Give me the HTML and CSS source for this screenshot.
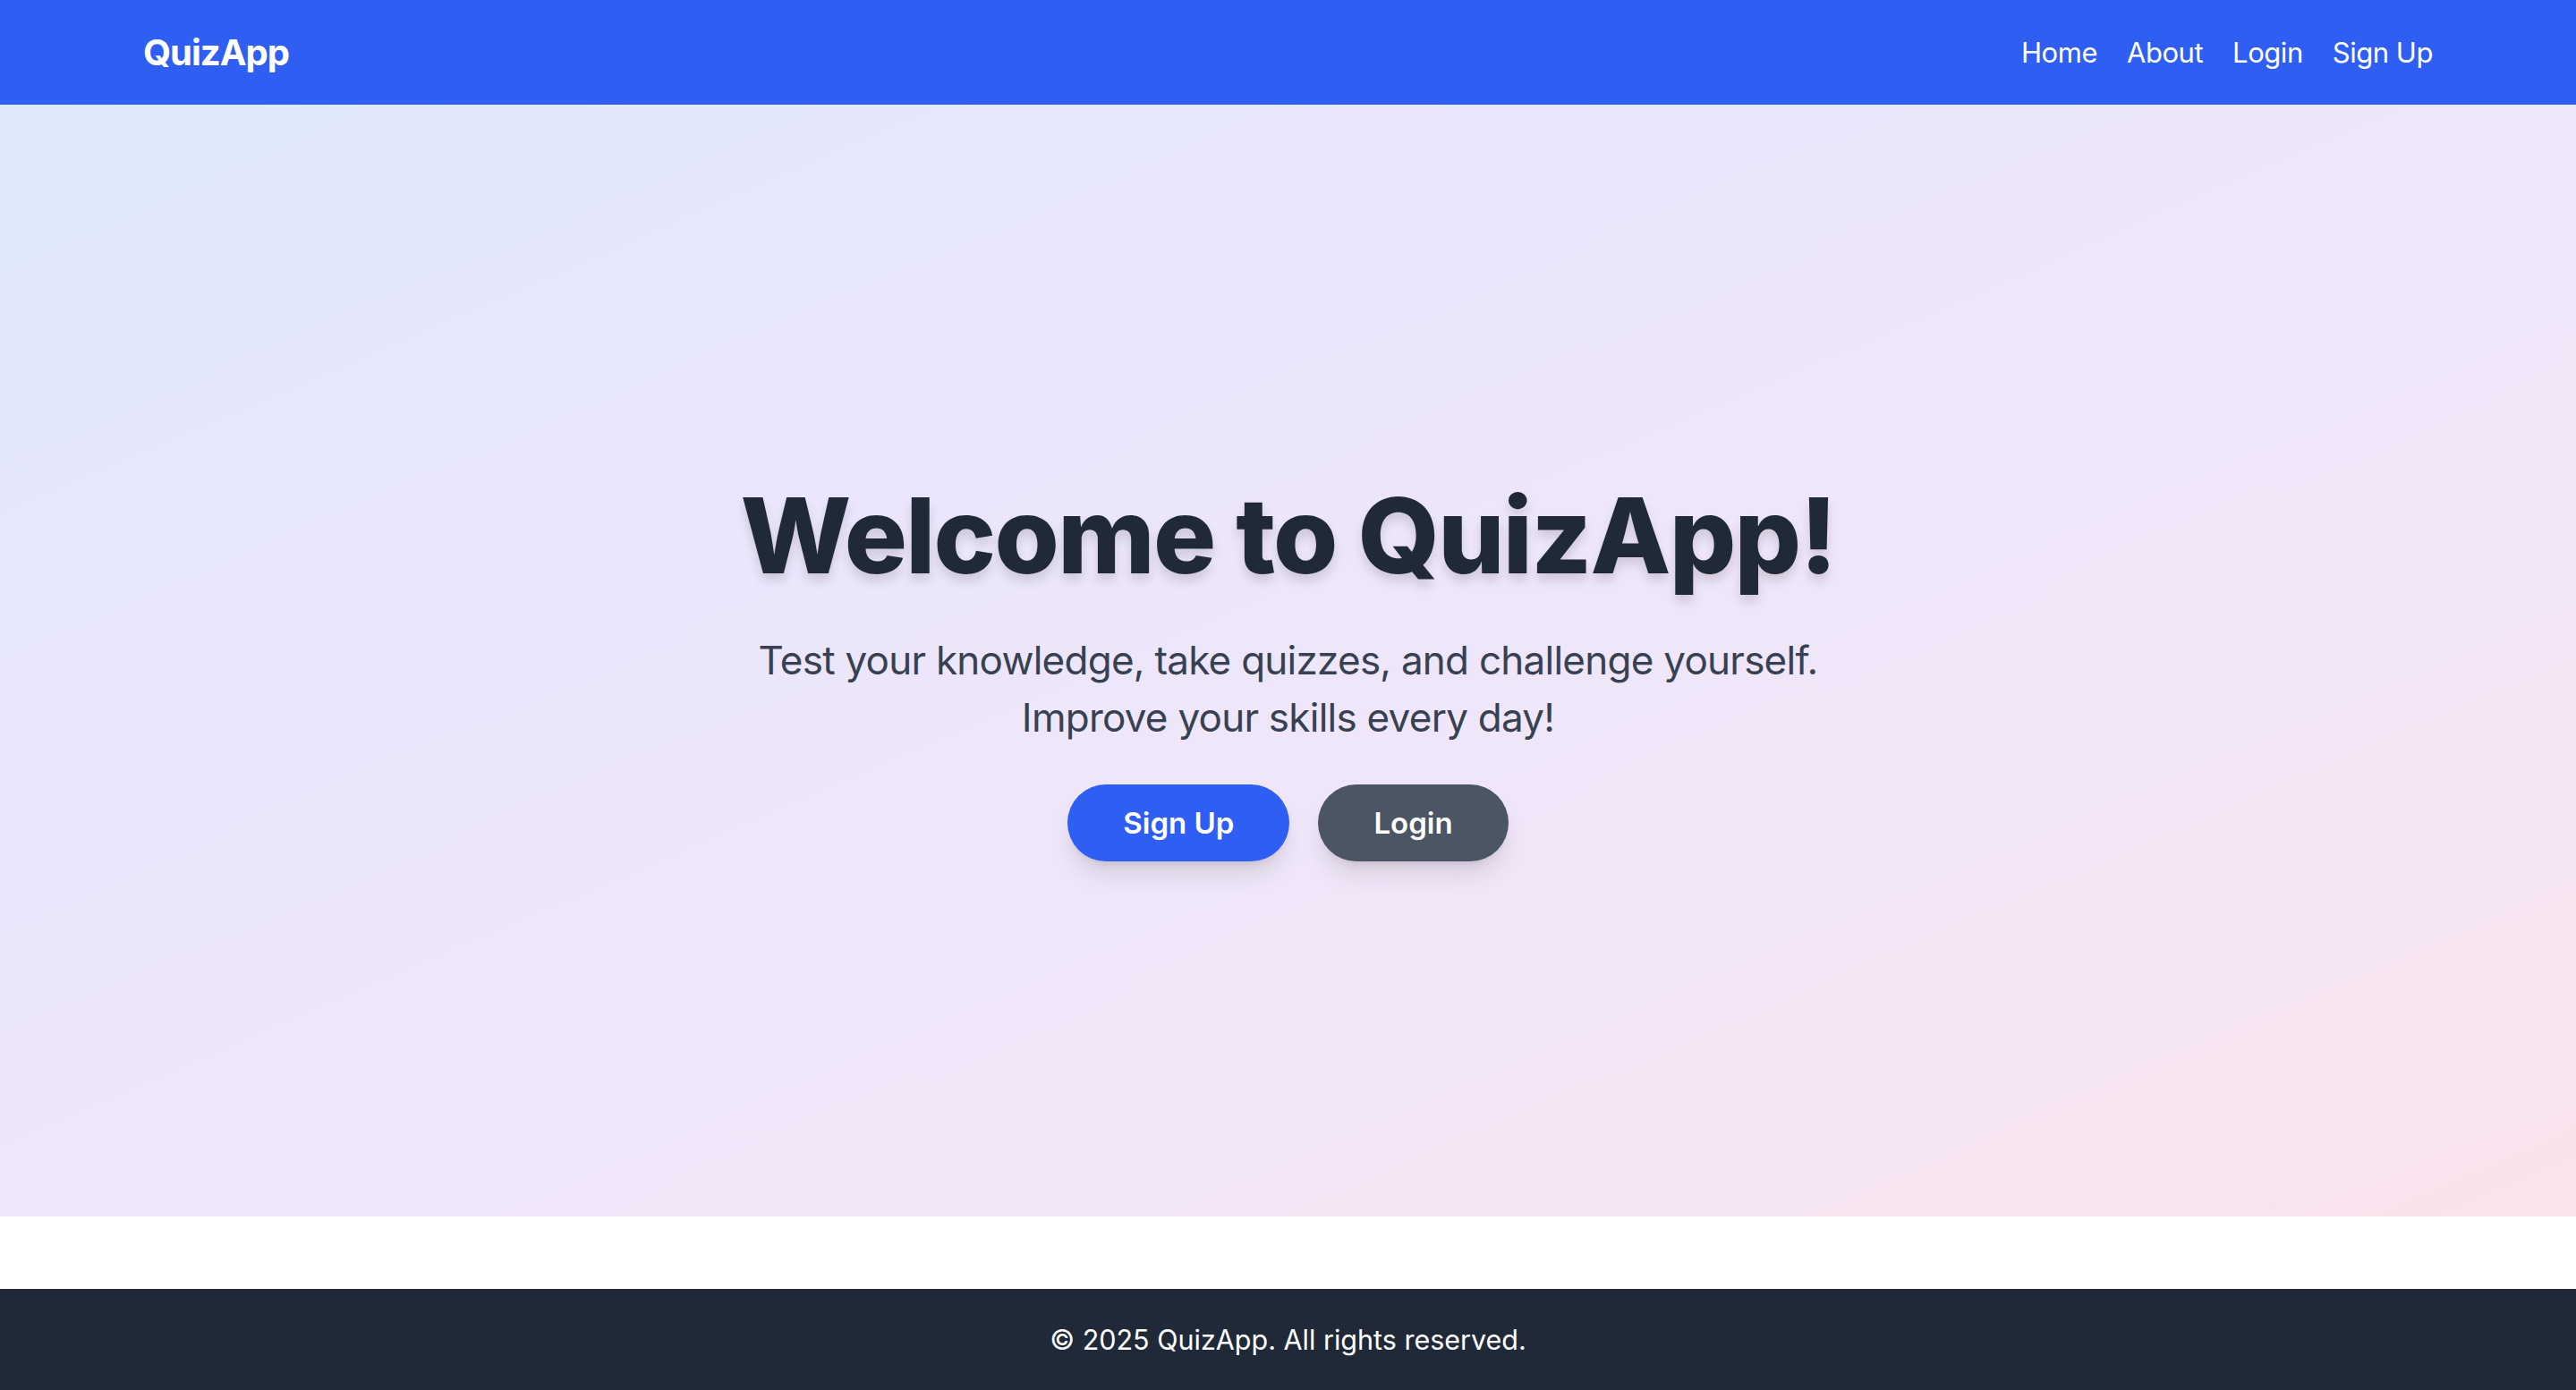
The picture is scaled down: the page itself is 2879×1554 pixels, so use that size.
FILE: index.html
```html
<!DOCTYPE html>
<html lang="en">
<head>
<meta charset="utf-8">
<title>QuizApp</title>
<link rel="stylesheet" href="styles.css">
</head>
<body>
<header class="topbar">
  <a class="logo" href="#">QuizApp</a>
  <nav class="nav">
    <a href="#">Home</a>
    <a href="#">About</a>
    <a href="#">Login</a>
    <a href="#">Sign Up</a>
  </nav>
</header>
<main class="hero">
  <h1 class="hero-title">Welcome to QuizApp!</h1>
  <p class="hero-text">Test your knowledge, take quizzes, and challenge yourself.<br>Improve your skills every day!</p>
  <div class="hero-actions">
    <a class="btn btn-primary" href="#">Sign Up</a>
    <a class="btn btn-dark" href="#">Login</a>
  </div>
</main>
<footer class="footer">
  <p>© 2025 QuizApp. All rights reserved.</p>
</footer>
</body>
</html>
```
FILE: styles.css
```css
* { box-sizing: border-box; }
html, body { margin: 0; padding: 0; }
body {
  font-family: Inter, "Noto Sans", "Liberation Sans", sans-serif;
  background: #ffffff;
  color: #1f2937;
}
a { text-decoration: none; color: inherit; }

.topbar {
  height: 117px;
  background: #2e5ef2;
  display: flex;
  align-items: center;
  justify-content: space-between;
  padding: 0 160px 0 160px;
  color: #ffffff;
}
.logo {
  font-size: 40px;
  font-weight: 700;
  letter-spacing: -0.025em;
}
.nav {
  display: flex;
  gap: 33px;
  font-size: 31px;
  letter-spacing: -0.015em;
}

.hero {
  height: 1243px;
  margin: 0 0 81px;
  padding-top: 26px;
  display: flex;
  flex-direction: column;
  align-items: center;
  justify-content: center;
  text-align: center;
  background: linear-gradient(to bottom right, #dde8fb 0%, #ebe6fb 35%, #f1e6f8 65%, #f9e3ec 100%);
}
.hero-title {
  margin: 0;
  font-size: 117px;
  line-height: 118px;
  font-weight: 800;
  letter-spacing: -0.015em;
  color: #1f2937;
  text-shadow: 0 8px 12px rgba(0, 0, 0, 0.13);
}
.hero-text {
  margin: 48px 0 0;
  font-size: 44px;
  line-height: 64px;
  color: #374151;
  letter-spacing: -0.017em;
}
.hero-actions {
  margin-top: 43px;
  display: flex;
  gap: 32px;
}
.btn {
  height: 86px;
  display: inline-flex;
  align-items: center;
  justify-content: center;
  padding: 0 62px;
  border-radius: 43px;
  font-size: 33px;
  font-weight: 600;
  color: #ffffff;
  box-shadow: 0 18px 28px -6px rgba(0, 0, 0, 0.12), 0 7px 11px -7px rgba(0, 0, 0, 0.12);
}
.btn-primary { background: #2e5ef2; }
.btn-dark { background: #4b5563; }

.footer {
  height: 113px;
  background: #1f2937;
  color: #ffffff;
  display: flex;
  align-items: center;
  justify-content: center;
}
.footer p {
  margin: 0;
  font-size: 30.5px;
}
```
